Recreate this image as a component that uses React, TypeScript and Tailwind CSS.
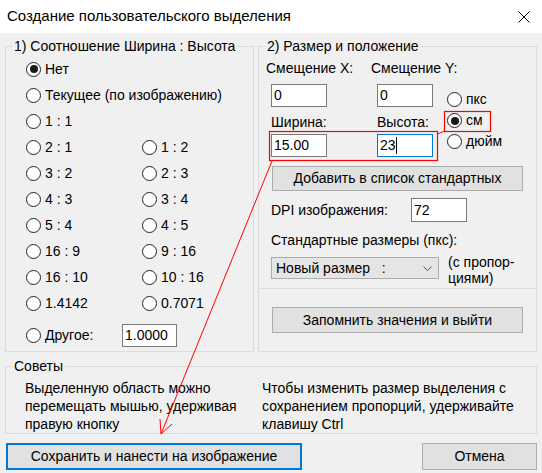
import React from "react";

const font = { fontFamily: '"Liberation Sans", Arial, sans-serif' };

function Radio({ checked = false, label }: { checked?: boolean; label: string }) {
  return (
    <div className="flex items-center gap-[4px] whitespace-nowrap">
      <span className="w-[15px] h-[15px] shrink-0 rounded-full border border-[#222222] bg-white flex items-center justify-center">
        {checked && <span className="w-[8px] h-[8px] rounded-full bg-[#1a1a1a]" />}
      </span>
      <span>{label}</span>
    </div>
  );
}

function Input({ value, className = "", focused = false, caret = false }: { value: string; className?: string; focused?: boolean; caret?: boolean }) {
  return (
    <div
      className={`bg-white border flex items-center pl-[2px] ${focused ? "border-[#0078d7]" : "border-[#7a7a7a]"} ${className}`}
    >
      <span>{value}</span>
      {caret && <span className="inline-block w-[1px] h-[17px] bg-black" />}
    </div>
  );
}

function Button({ label, className = "" }: { label: string; className?: string }) {
  return (
    <div className={`bg-[#e1e1e1] border border-[#adadad] flex items-center justify-center whitespace-nowrap ${className}`}>
      {label}
    </div>
  );
}

export default function App() {
  const ratios: [string, string][] = [
    ["2 : 1", "1 : 2"],
    ["3 : 2", "2 : 3"],
    ["4 : 3", "3 : 4"],
    ["5 : 4", "4 : 5"],
    ["16 : 9", "9 : 16"],
    ["16 : 10", "10 : 16"],
    ["1.4142", "0.7071"],
  ];
  return (
    <div className="relative w-[542px] h-[473px] overflow-hidden text-[14px] text-black bg-[#f0f0f0]" style={font}>
      {/* Title bar */}
      <div className="h-[33px] bg-white flex items-center justify-between pl-[7px] pr-[11px]">
        <span className="text-[15px]">Создание пользовательского выделения</span>
        <svg width="14" height="14" viewBox="0 0 14 14">
          <path d="M1.5 1.5 L12.5 12.5 M12.5 1.5 L1.5 12.5" stroke="#000" strokeWidth="1" fill="none" />
        </svg>
      </div>

      {/* Body */}
      <div className="px-[5px] pt-[3px]">
        <div className="flex gap-[4px]">
          {/* Group 1 */}
          <fieldset className="w-[249px] min-w-0 border border-[#dcdcdc]">
            <legend className="ml-[6px] px-[2px] leading-[20px] whitespace-nowrap">1) Соотношение Ширина : Высота</legend>
            <div className="pl-[20px] pb-[3px]">
              <div className="h-[26px] flex items-center">
                <Radio checked label="Нет" />
              </div>
              <div className="h-[26px] flex items-center">
                <Radio label="Текущее (по изображению)" />
              </div>
              <div className="h-[26px] flex items-center">
                <Radio label="1 : 1" />
              </div>
              <div className="grid grid-cols-[116px_1fr] auto-rows-[26px]">
                {ratios.map(([a, b]) => (
                  <React.Fragment key={a}>
                    <div className="flex items-center">
                      <Radio label={a} />
                    </div>
                    <div className="flex items-center">
                      <Radio label={b} />
                    </div>
                  </React.Fragment>
                ))}
              </div>
              <div className="mt-[6px] h-[26px] flex items-center">
                <div className="w-[96px]">
                  <Radio label="Другое:" />
                </div>
                <Input value="1.0000" className="w-[55px] h-[23px]" />
              </div>
            </div>
          </fieldset>

          {/* Group 2 */}
          <fieldset className="w-[279px] min-w-0 border border-[#dcdcdc]">
            <legend className="ml-[6px] px-[2px] leading-[20px] whitespace-nowrap">2) Размер и положение</legend>
            <div className="pl-[7px] pb-[2px]">
              <div className="flex">
                <div className="w-[167px] shrink-0">
                  <div className="h-[24px] flex items-center whitespace-nowrap">
                    <span className="w-[105px] shrink-0">Смещение X:</span>
                    <span>Смещение Y:</span>
                  </div>
                  <div className="mt-[4px] flex">
                    <Input value="0" className="ml-[5px] w-[56px] h-[23px]" />
                    <Input value="0" className="ml-[50px] w-[56px] h-[23px]" />
                  </div>
                  <div className="mt-[3px] h-[24px] flex items-center whitespace-nowrap">
                    <span className="ml-[5px] w-[106px] shrink-0">Ширина:</span>
                    <span>Высота:</span>
                  </div>
                  <div className="flex">
                    <Input value="15.00" className="ml-[5px] w-[56px] h-[23px]" />
                    <Input value="23" focused caret className="ml-[50px] w-[56px] h-[23px]" />
                  </div>
                </div>
                <div className="ml-[14px] mt-[33px]">
                  <div className="h-[21px] flex items-center">
                    <Radio label="пкс" />
                  </div>
                  <div className="h-[21px] flex items-center">
                    <Radio checked label="см" />
                  </div>
                  <div className="h-[21px] flex items-center">
                    <Radio label="дюйм" />
                  </div>
                </div>
              </div>
              <Button label="Добавить в список стандартных" className="mt-[9px] ml-[6px] w-[251px] h-[25px]" />
              <div className="mt-[7px] h-[24px] flex items-center">
                <span className="ml-[5px] w-[140px] shrink-0">DPI изображения:</span>
                <Input value="72" className="w-[56px] h-[24px]" />
              </div>
              <div className="mt-[8px] h-[20px] flex items-center">
                <span className="ml-[5px] whitespace-nowrap">Стандартные размеры (пкс):</span>
              </div>
              <div className="mt-[4px] h-[32px] flex items-start">
                <div className="mt-[3px] ml-[5px] w-[168px] shrink-0 h-[22px] bg-[#e5e5e5] border border-[#acacac] flex items-center justify-between pl-[4px] pr-[6px]">
                  <span className="whitespace-pre">Новый размер   :</span>
                  <svg width="9" height="5" viewBox="0 0 9 5">
                    <path d="M0.5 0.5 L4.5 4.5 L8.5 0.5" stroke="#555" strokeWidth="1" fill="none" />
                  </svg>
                </div>
                <div className="ml-[9px] leading-[16px] whitespace-nowrap">
                  (с пропор-
                  <br />
                  циями)
                </div>
              </div>
            </div>
            <div className="border-t border-[#dcdcdc] pt-[18px] pb-[18px]">
              <Button label="Запомнить значения и выйти" className="ml-[13px] w-[251px] h-[26px]" />
            </div>
          </fieldset>
        </div>

        {/* Tips */}
        <fieldset className="mt-[4px] w-[532px] min-w-0 border border-[#dcdcdc]">
          <legend className="ml-[6px] px-[2px] leading-[20px]">Советы</legend>
          <div className="grid grid-cols-[237px_1fr] pl-[19px] pt-[3px] leading-[18px] whitespace-nowrap">
            <div>
              Выделенную область можно
              <br />
              перемещать мышью, удерживая
              <br />
              правую кнопку
            </div>
            <div>
              Чтобы изменить размер выделения с
              <br />
              сохранением пропорций, удерживайте
              <br />
              клавишу Ctrl
            </div>
          </div>
        </fieldset>

        {/* Buttons */}
        <div className="mt-[9px] flex">
          <div className="ml-[1px] w-[296px] h-[27px] bg-[#e1e1e1] border-2 border-[#0078d7] flex items-center justify-center whitespace-nowrap">
            Сохранить и нанести на изображение
          </div>
          <Button label="Отмена" className="ml-auto w-[115px] h-[27px]" />
        </div>
      </div>

      {/* Red annotations overlay */}
      <svg className="absolute top-0 left-0 pointer-events-none" width="542" height="473" viewBox="0 0 542 473">
        <rect x="269.5" y="131.5" width="168" height="29" fill="none" stroke="#ff0000" strokeWidth="1.2" />
        <rect x="444.5" y="111.5" width="46" height="20" fill="none" stroke="#ff0000" strokeWidth="1.2" />
        <line x1="437.5" y1="134" x2="444.5" y2="131" stroke="#ff0000" strokeWidth="1" />
        <line x1="272" y1="161" x2="161" y2="434" stroke="#ff0000" strokeWidth="1" />
        <path d="M160 419 L161 434 L172 424" fill="none" stroke="#ff0000" strokeWidth="1" />
      </svg>
    </div>
  );
}
